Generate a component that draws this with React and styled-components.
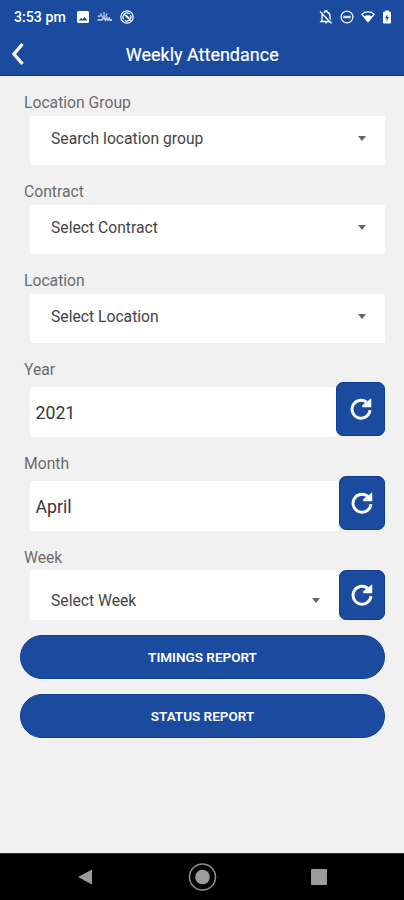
import React, { useState } from 'react';
import styled, { createGlobalStyle } from 'styled-components';

const selects = [
  { id: 1, label: 'Location Group', value: 'Search location group' },
  { id: 2, label: 'Contract', value: 'Select Contract' },
  { id: 3, label: 'Location', value: 'Select Location' },
];

function RefreshIcon() {
  return (
    <svg width="24" height="24" viewBox="0 0 24 24" fill="none">
      <path d="M17.6 5.2A9 9 0 1 0 21 13.200" stroke="#fff" strokeWidth="2.900" />
      <path d="M22 1.800V10H13.500V8.300Z" fill="#fff" stroke="#fff" strokeWidth="0.500" />
    </svg>
  );
}

function StatusIcons() {
  return (
    <StIconGroup gap="8px">
      <svg width="12" height="12" viewBox="0 0 12 12">
        <path
          fillRule="evenodd"
          fill="#fff"
          d="M1.5 0h9A1.5 1.5 0 0 1 12 1.5v9a1.5 1.5 0 0 1-1.5 1.5h-9A1.5 1.5 0 0 1 0 10.500v-9A1.500 1.500 0 0 1 1.500 0ZM1.800 9.500h8.400L7.500 5.900 5.500 8.400 4.100 6.800Z"
        />
      </svg>
      <svg width="15" height="12" viewBox="0 0 15 12" fill="none" stroke="#b9c8e8">
        <path d="M.5 8.800h4.500L7 6l1.500 3L10 7l1 2 1.300-1.500.7 1.500h2" strokeWidth="1.800" />
        <path d="M.8 5.500 4.500 4.500M3.500 2.200l2 4M7 1v4M10 2.500 8.500 6" strokeWidth="1.300" />
      </svg>
      <svg width="14" height="14" viewBox="0 0 14 14" fill="none" stroke="#fff">
        <circle cx="7" cy="7" r="6.200" strokeWidth="1.200" />
        <path d="M3.800 9.300A4 4 0 0 1 9.600 3.900M10.400 5a4 4 0 0 1-5.600 5.400M3.600 3.600l7 7M6 5.200l3 2.800" strokeWidth="1.200" />
      </svg>
    </StIconGroup>
  );
}

function SystemIcons() {
  return (
    <StIconGroup gap="7px">
      <svg width="14" height="14" viewBox="0 0 14 14">
        <path d="M3 10.500V6c0-2 1.200-3.500 3-4V1h2v1c1.800.5 3 2 3 4v4.500l1 1H2Z" fill="none" stroke="#fff" strokeWidth="1.300" />
        <path d="M5.700 12.200h2.600a1.300 1.300 0 0 1-2.600 0Z" fill="#fff" />
        <path d="m2 .8 11 12" stroke="#1a4b9f" strokeWidth="1.300" />
        <path d="m1 1.500 11.500 12" stroke="#fff" strokeWidth="1.200" />
      </svg>
      <svg width="14" height="14" viewBox="0 0 14 14" fill="none" stroke="#fff">
        <circle cx="7" cy="7" r="5.900" strokeWidth="1.200" />
        <path d="M3.300 7h7.400" strokeWidth="2.400" opacity="0.850" />
      </svg>
      <svg width="14" height="12" viewBox="0 0 14 12">
        <path d="M.8 3.200C4.300.2 9.700.2 13.200 3.200L7 10.900Z" fill="none" stroke="#fff" strokeWidth="1.200" />
        <path d="M3 5.500c2.400-1.700 5.600-1.700 8 0L7 11Z" fill="#fff" />
      </svg>
      <svg width="10" height="14" viewBox="0 0 10 14">
        <path d="M3 .5h4v1.300h1.200c.5 0 .8.300.8.800v10c0 .5-.3.900-.8.900H1.800c-.5 0-.8-.4-.8-.9v-10c0-.5.3-.8.800-.8H3Z" fill="#fff" />
        <path d="M5.500 4.200 3 8.200h1.600v3L7 7.200H5.500Z" fill="#1a4b9f" />
      </svg>
    </StIconGroup>
  );
}

function App() {
  const [year] = useState('2021');
  const [month] = useState('April');

  return (
    <StScreen>
      <GlobalStyle />
      <StHeader>
        <StStatusBar>
          <StTime>3:53 pm</StTime>
          <StatusIcons />
          <StSpacer />
          <SystemIcons />
        </StStatusBar>
        <StTitleBar>
          <svg width="14" height="24" viewBox="0 0 14 24" fill="none">
            <path d="M11.500 2 3 12l8.500 10" stroke="#fff" strokeWidth="3.400" />
          </svg>
          <StTitle>Weekly Attendance</StTitle>
        </StTitleBar>
      </StHeader>
      <StForm>
        {selects.map((select) => {
          return (
            <StField key={select.id} height="89px">
              <StLabel>{select.label}</StLabel>
              <StSelect>
                <StSelectText>{select.value}</StSelectText>
                <StArrow />
              </StSelect>
            </StField>
          );
        })}
        <StField height="94px">
          <StLabel>Year</StLabel>
          <StRow>
            <StInput>{year}</StInput>
            <StRefresh width="49px" height="54px">
              <RefreshIcon />
            </StRefresh>
          </StRow>
        </StField>
        <StField height="94px">
          <StLabel>Month</StLabel>
          <StRow>
            <StInput>{month}</StInput>
            <StRefresh width="46.500px" height="54px">
              <RefreshIcon />
            </StRefresh>
          </StRow>
        </StField>
        <StField height="87.500px">
          <StLabel>Week</StLabel>
          <StRow>
            <StSelect $week>
              <StSelectText>Select Week</StSelectText>
              <StArrow />
            </StSelect>
            <StRefresh width="46.500px" height="49.500px">
              <RefreshIcon />
            </StRefresh>
          </StRow>
        </StField>
        <StReportButton>TIMINGS REPORT</StReportButton>
        <StReportButton>STATUS REPORT</StReportButton>
      </StForm>
      <StNavBar>
        <svg width="16" height="18" viewBox="0 0 16 18">
          <path d="M15 1.500v15L1 9Z" fill="#9b9b9b" />
        </svg>
        <svg width="30" height="30" viewBox="0 0 30 30">
          <circle cx="15.500" cy="15" r="13" fill="none" stroke="#8d8d8d" strokeWidth="1.500" />
          <circle cx="15.500" cy="15" r="7.300" fill="#9b9b9b" />
        </svg>
        <svg width="16" height="16" viewBox="0 0 16 16">
          <rect width="16" height="16" rx="1" fill="#9b9b9b" />
        </svg>
      </StNavBar>
    </StScreen>
  );
}

const GlobalStyle = createGlobalStyle`
  * {
    box-sizing: border-box;
  }

  body {
    margin: 0;
    font-family: Roboto, sans-serif;
  }

  svg {
    display: block;
    flex-shrink: 0;
  }
`;

const StScreen = styled.div`
  display: flex;
  flex-direction: column;
  width: 404px;
  height: 900px;
  background: #f1f1f1;
  overflow: hidden;
`;

const StHeader = styled.header`
  height: 76px;
  background: #1a4b9f;
  border-bottom: 1px solid #083590;
`;

const StStatusBar = styled.div`
  display: flex;
  align-items: center;
  height: 33px;
  padding: 0 12px 0 14px;
  color: #fff;
`;

const StTime = styled.div`
  width: 63px;
  padding-top: 1px;
  font-size: 14.200px;
  font-weight: 500;
  white-space: nowrap;
`;

const StIconGroup = styled.div`
  display: flex;
  align-items: center;
  gap: ${(props) => props.gap};
`;

const StSpacer = styled.div`
  flex: 1;
`;

const StTitleBar = styled.div`
  display: flex;
  align-items: center;
  height: 42px;
  padding-left: 10.500px;
`;

const StTitle = styled.h1`
  flex: 1;
  margin: 2px 24px 0 0;
  color: #fff;
  font-size: 18px;
  font-weight: 400;
  -webkit-text-stroke: 0.2px #fff;
  line-height: 24px;
  text-align: center;
`;

const StForm = styled.main`
  flex: 1;
  padding: 16px 19px 0 20px;
`;

const StField = styled.div`
  height: ${(props) => props.height};
`;

const StLabel = styled.div`
  height: 20px;
  padding-left: 4px;
  color: #6c6c6c;
  font-size: 15.700px;
  line-height: 21px;
`;

const StSelect = styled.div`
  display: flex;
  flex: 1;
  align-items: center;
  justify-content: space-between;
  height: ${(props) => (props.$week ? '49.5px' : '49px')};
  margin: ${(props) => (props.$week ? '0' : '4px 0 0 10px')};
  padding: ${(props) => (props.$week ? '12px 19px 0 21px' : '0 19px 4px 21px')};
  background: #fff;
  border-radius: 2px;
`;

const StSelectText = styled.span`
  color: #444;
  font-size: 15.700px;
  line-height: 21px;
`;

const StArrow = styled.span`
  border: 4.500px solid transparent;
  border-top: 5px solid #666;
  border-bottom: 0;
`;

const StRow = styled.div`
  display: flex;
  align-items: flex-end;
  padding: 3px 0 0 10px;
`;

const StInput = styled.div`
  flex: 1;
  height: 50px;
  margin-bottom: -1px;
  padding: 0 5.500px;
  background: #fff;
  border-radius: 2px;
  color: #383838;
  font-size: 17.700px;
  line-height: 52px;
`;

const StRefresh = styled.button`
  display: flex;
  align-items: center;
  justify-content: center;
  width: ${(props) => props.width};
  height: ${(props) => props.height};
  padding: 0;
  background: #1a4b9f;
  border: 1px solid #0b3c98;
  border-radius: 7px;
`;

const StReportButton = styled.button`
  display: block;
  width: 100%;
  height: 44.500px;
  margin-bottom: 14.500px;
  padding: 0;
  background: #1a4b9f;
  border: 1px solid #103f98;
  border-radius: 23px;
  color: #fff;
  font-family: inherit;
  font-size: 13.500px;
  font-weight: 600;
  line-height: 20px;
`;

const StNavBar = styled.nav`
  display: flex;
  align-items: center;
  justify-content: space-between;
  height: 47px;
  padding: 0 77px;
  background: #000;
  border-top: 1px solid #333;
`;

export default App;
